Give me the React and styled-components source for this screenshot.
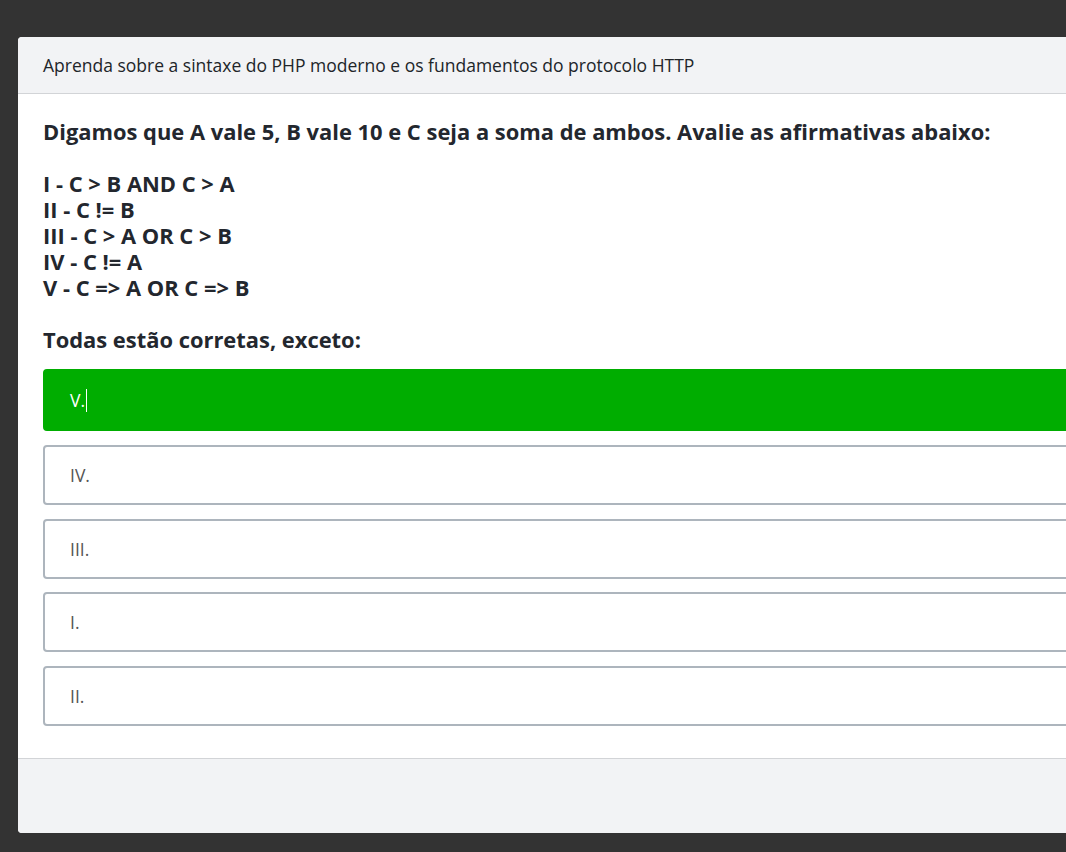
import React from 'react'
import styled, { createGlobalStyle } from 'styled-components'

const GlobalStyle = createGlobalStyle`
  html, body {
    margin: 0;
    padding: 0;
    background: #333333;
    overflow: hidden;
  }
  body {
    font-family: "Open Sans", "Liberation Sans", sans-serif;
    color: #212529;
  }
`

const Page = styled.div`
  padding: 37px 0 20px 18px;
  min-height: 852px;
  box-sizing: border-box;
`

const Card = styled.div`
  width: 1120px;
  background: #ffffff;
  border-radius: 4px;
  overflow: hidden;
  display: flex;
  flex-direction: column;
`

const Header = styled.div`
  background: #f2f3f5;
  border-bottom: 1px solid #d2d4d7;
  padding: 16px 25px;
  font-size: 17.5px;
  line-height: 24px;
  color: #212529;
`

const Body = styled.div`
  padding: 25px 25px 32px;
`

const Question = styled.p`
  margin: 0 0 16px;
  font-size: 21.9px;
  font-weight: 700;
  line-height: 26px;
  white-space: pre-line;
  color: #23272e;
`

const Options = styled.div`
  display: flex;
  flex-direction: column;
  gap: 13.5px;
`

const Option = styled.div`
  box-sizing: border-box;
  height: ${p => (p.$selected ? '62px' : '60px')};
  margin-bottom: ${p => (p.$selected ? '0.5px' : '0')};
  display: flex;
  align-items: center;
  padding: 0 25px;
  border: 2px solid ${p => (p.$selected ? '#00ad00' : '#adb5bd')};
  border-radius: 4px;
  background: ${p => (p.$selected ? '#00ad00' : '#ffffff')};
  color: ${p => (p.$selected ? '#ffffff' : '#555555')};
  font-size: 17.5px;
  line-height: 24px;
`

const Caret = styled.span`
  display: inline-block;
  width: 1px;
  height: 23px;
  margin-left: 1px;
  background: #ffffff;
  vertical-align: middle;
`

const Footer = styled.div`
  background: #f2f3f5;
  border-top: 1px solid #d2d4d7;
  height: 74px;
`

const question = `Digamos que A vale 5, B vale 10 e C seja a soma de ambos. Avalie as afirmativas abaixo:

I - C > B AND C > A
II - C != B
III - C > A OR C > B
IV - C != A
V - C => A OR C => B

Todas estão corretas, exceto:`

const options = ['V.', 'IV.', 'III.', 'I.', 'II.']

export default function App() {
  return (
    <>
      <GlobalStyle />
      <Page>
        <Card>
          <Header>Aprenda sobre a sintaxe do PHP moderno e os fundamentos do protocolo HTTP</Header>
          <Body>
            <Question>{question}</Question>
            <Options>
              {options.map((opt, i) => (
                <Option key={opt} $selected={i === 0}>
                  {opt}
                  {i === 0 && <Caret />}
                </Option>
              ))}
            </Options>
          </Body>
          <Footer />
        </Card>
      </Page>
    </>
  )
}
